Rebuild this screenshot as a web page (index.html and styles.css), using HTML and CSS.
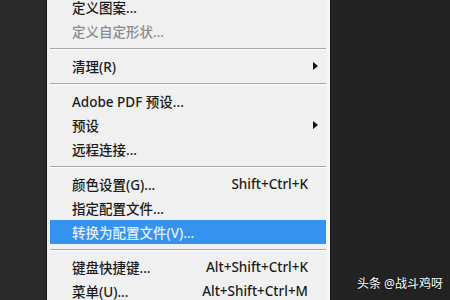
FILE: index.html
```html
<!DOCTYPE html>
<html lang="zh-CN">

<head>
    <meta charset="UTF-8">
    <title>编辑菜单</title>
    <link rel="stylesheet" href="styles.css">
</head>

<body>
    <div class="stage">
        <div class="menu">
            <div class="menu-item">定义图案...</div>
            <div class="menu-item disabled">定义自定形状...</div>
            <div class="sep"></div>
            <div class="menu-item">清理(R)<span class="arrow"></span></div>
            <div class="sep"></div>
            <div class="menu-item">Adobe PDF 预设...</div>
            <div class="menu-item">预设<span class="arrow"></span></div>
            <div class="menu-item">远程连接...</div>
            <div class="sep"></div>
            <div class="menu-item">颜色设置(G)...<span class="key">Shift+Ctrl+K</span></div>
            <div class="menu-item">指定配置文件...</div>
            <div class="menu-item active">转换为配置文件(V)...</div>
            <div class="sep"></div>
            <div class="menu-item">键盘快捷键...<span class="key">Alt+Shift+Ctrl+K</span></div>
            <div class="menu-item">菜单(U)...<span class="key">Alt+Shift+Ctrl+M</span></div>
        </div>
        <div class="watermark">头条 @战斗鸡呀</div>
    </div>
</body>

</html>
```

FILE: styles.css
```css
body {
    margin: 0;
    background: #252525;
    font-family: "Noto Sans", "Noto Sans CJK SC", sans-serif;
}

.stage {
    position: relative;
    width: 450px;
    height: 300px;
    overflow: hidden;
    background: linear-gradient(to right, #2a2a2a, #232323 60%, #222);
}

.menu {
    margin: -5px 0 0 46px;
    width: 276px;
    padding: 0 4px 0 3px;
    background: #f0f0f0;
    border-left: 1px solid #161616;
    border-right: 1px solid #161616;
    box-shadow: inset -3px 0 0 #f6f6f6;
}

.menu-item {
    display: flex;
    align-items: center;
    height: 24px;
    padding: 0 18px 0 22px;
    font-size: 13.5px;
    font-weight: 500;
    color: #1a1a1a;
    position: relative;
}

.menu-item.disabled {
    color: #8c8c8c;
}

.menu-item.active {
    background: #3592ee;
    color: #e4f1ff;
}

.menu-item .key {
    margin-left: auto;
}

.arrow {
    position: absolute;
    right: 8px;
    top: 8px;
    border-left: 5px solid #111;
    border-top: 4px solid transparent;
    border-bottom: 4px solid transparent;
}

.sep {
    height: 11px;
    display: flex;
    flex-direction: column;
    justify-content: center;
}

.sep::before {
    content: "";
    height: 1px;
    background: #a9a9a9;
    border-bottom: 1px solid #fbfbfb;
}

.watermark {
    position: absolute;
    left: 357px;
    top: 274px;
    font-size: 12px;
    color: #fff;
    text-shadow: 0 0 2px rgba(0, 0, 0, .6);
}
```
